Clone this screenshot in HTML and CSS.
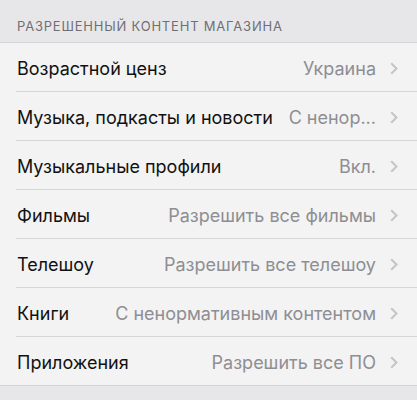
FILE: index.html
```html
<!DOCTYPE html>
<html lang="ru">
<head>
    <meta charset="UTF-8">
    <meta name="viewport" content="width=device-width, initial-scale=1.0">
    <title>Ограничения</title>
    <link rel="stylesheet" href="styles.css">
</head>
<body>
<div class="section-header">Разрешенный контент магазина</div>
<ul class="settings-list">
    <li class="row">
        <div class="row-inner">
            <span class="row-title">Возрастной ценз</span>
            <span class="row-value">Украина</span>
            <svg class="chevron" width="8" height="13" viewBox="0 0 8 13"><path d="M1.2 1.2 L6.5 6.5 L1.2 11.8"/></svg>
        </div>
    </li>
    <li class="row">
        <div class="row-inner">
            <span class="row-title">Музыка, подкасты и новости</span>
            <span class="row-value">С ненор...</span>
            <svg class="chevron" width="8" height="13" viewBox="0 0 8 13"><path d="M1.2 1.2 L6.5 6.5 L1.2 11.8"/></svg>
        </div>
    </li>
    <li class="row">
        <div class="row-inner">
            <span class="row-title">Музыкальные профили</span>
            <span class="row-value">Вкл.</span>
            <svg class="chevron" width="8" height="13" viewBox="0 0 8 13"><path d="M1.2 1.2 L6.5 6.5 L1.2 11.8"/></svg>
        </div>
    </li>
    <li class="row">
        <div class="row-inner">
            <span class="row-title">Фильмы</span>
            <span class="row-value">Разрешить все фильмы</span>
            <svg class="chevron" width="8" height="13" viewBox="0 0 8 13"><path d="M1.2 1.2 L6.5 6.5 L1.2 11.8"/></svg>
        </div>
    </li>
    <li class="row">
        <div class="row-inner">
            <span class="row-title">Телешоу</span>
            <span class="row-value">Разрешить все телешоу</span>
            <svg class="chevron" width="8" height="13" viewBox="0 0 8 13"><path d="M1.2 1.2 L6.5 6.5 L1.2 11.8"/></svg>
        </div>
    </li>
    <li class="row">
        <div class="row-inner">
            <span class="row-title">Книги</span>
            <span class="row-value">С ненормативным контентом</span>
            <svg class="chevron" width="8" height="13" viewBox="0 0 8 13"><path d="M1.2 1.2 L6.5 6.5 L1.2 11.8"/></svg>
        </div>
    </li>
    <li class="row">
        <div class="row-inner">
            <span class="row-title">Приложения</span>
            <span class="row-value">Разрешить все ПО</span>
            <svg class="chevron" width="8" height="13" viewBox="0 0 8 13"><path d="M1.2 1.2 L6.5 6.5 L1.2 11.8"/></svg>
        </div>
    </li>
</ul>
</body>
</html>
```

FILE: styles.css
```css
body {
    margin: 0;
    padding: 0;
    background-color: #e7e7e9;
    font-family: "Inter", "Liberation Sans", sans-serif;
    -webkit-font-smoothing: antialiased;
}

.section-header {
    height: 43px;
    box-sizing: border-box;
    padding: 18px 17px 0;
    font-size: 13px;
    line-height: 17px;
    letter-spacing: 0.8px;
    color: #6f6f73;
    text-transform: uppercase;
    border-bottom: 1px solid #d4d4d6;
}

.settings-list {
    list-style: none;
    margin: 0;
    padding: 0;
    background-color: #f3f3f3;
    border-bottom: 1px solid #d4d4d6;
}

.row {
    padding-left: 16px;
}

.row-inner {
    display: flex;
    align-items: center;
    height: 46px;
    padding: 2px 19px 0 1px;
    border-bottom: 1px solid #d6d6d8;
}

.row:last-child .row-inner {
    border-bottom: none;
}

.row-title {
    font-size: 18px;
    color: #111;
    white-space: nowrap;
}

.row-value {
    margin-left: auto;
    font-size: 18px;
    color: #8e8e93;
    white-space: nowrap;
}

/* disclosure arrow */
.chevron {
    flex: none;
    margin-left: 14px;
    fill: none;
    stroke: #c4c4c8;
    stroke-width: 2;
}
```
